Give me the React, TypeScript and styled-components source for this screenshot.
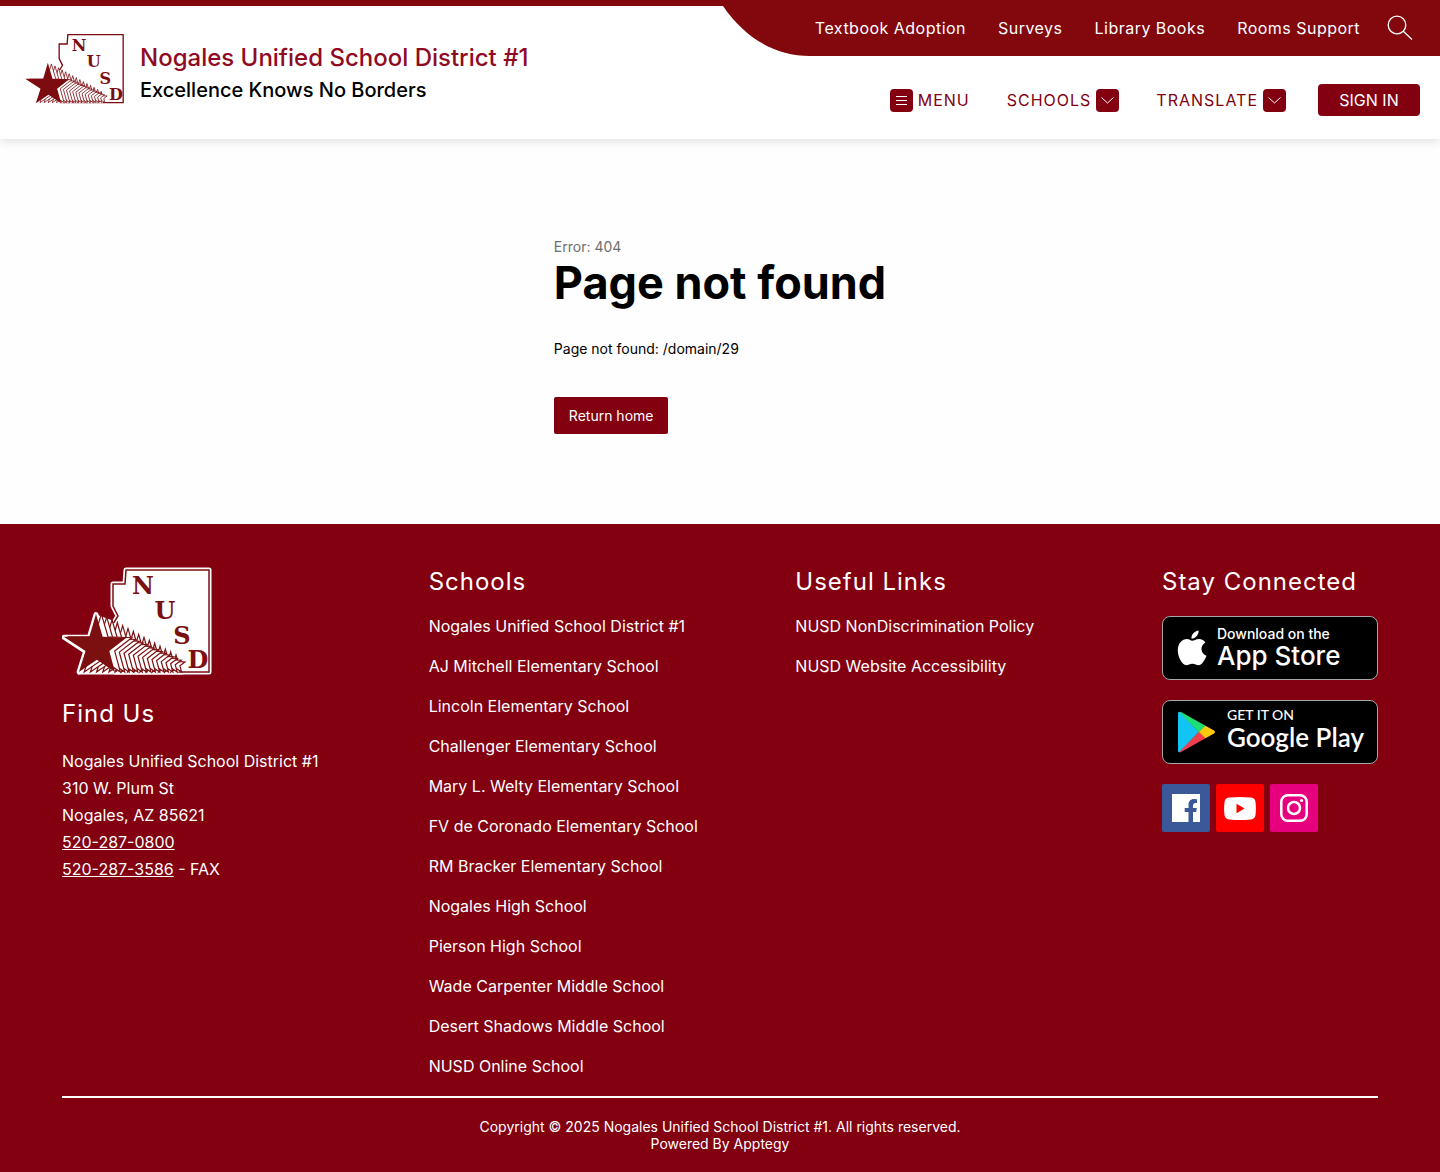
import React from "react";
import styled, { createGlobalStyle } from "styled-components";

const maroon = "#820010";
const banner = "#82080d";

const GlobalStyle = createGlobalStyle`
  *, *::before, *::after { box-sizing: border-box; }
  body {
    margin: 0;
    background: #fefefe;
    color: #000;
    font-family: Inter, "Liberation Sans", sans-serif;
    font-size: 16px;
  }
  h1, h2, p, ul { margin: 0; padding: 0; }
  ul { list-style: none; }
  a { color: inherit; text-decoration: none; }
  button { font: inherit; border: 0; cursor: pointer; }
  svg { display: block; flex: none; }
`;

/* ---------- district logo ---------- */

const starPoints = (scale: number, tipX: number, baseY: number) =>
  [
    [34, 45], [41, 69], [66, 70], [48, 84], [54, 106],
    [35, 93], [16, 106], [23, 84], [0, 69], [27, 69],
  ]
    .map(([x, y]) => `${tipX + (x - 34) * scale},${baseY + (y - 106) * scale}`)
    .join(" ");

const trail = Array.from({ length: 15 }, (_, i) => {
  const t = (15 - i) / 15;
  return { scale: 1 - t * 0.72, x: 34 + t * 80 };
});

const statePath = "M64 3 H147 V105 H104 L54 105 L48 68 L51 57 L56 49 L51 39 V17 H63 Z";

function Logo({ width, height, outlined }: { width: number; height: number; outlined?: boolean }) {
  const ink = outlined ? "#7c0f10" : "#7d0c10";
  return (
    <svg
      width={width}
      height={height}
      viewBox={outlined ? "0 0 150 108" : "0 2 148 105"}
      role="img"
      aria-label="NUSD logo"
    >
      {outlined && (
        <g fill="#fff" stroke="#fff" strokeWidth="5" strokeLinejoin="round">
          <path d={statePath} />
          <polygon points={starPoints(0.94, 34, 105)} />
          <path d="M34 50 L56 58 L120 92 V105 H18 L30 92 Z" />
        </g>
      )}
      <path d={statePath} fill="#fff" stroke={ink} strokeWidth={outlined ? 1.5 : 2} />
      <path d="M40 56 L52 56 L122 91 L116 106 H40 Z" fill="#fff" />
      {trail.map((s) => (
        <polygon key={s.x} points={starPoints(s.scale, s.x, 105)} fill="#fff" stroke={ink} strokeWidth="1.2" />
      ))}
      <polygon points={starPoints(outlined ? 0.95 : 1, 34, outlined ? 105 : 106)} fill={ink} />
      <g fill={ink} fontFamily='"DejaVu Serif", serif' fontWeight="700" fontSize="24" textAnchor="middle">
        <text x="81" y="27">N</text>
        <text x="103" y="52">U</text>
        <text x="120" y="77">S</text>
        <text x="136" y="101">D</text>
      </g>
    </svg>
  );
}

/* ---------- header ---------- */

const Header = styled.header`
  display: flex;
  justify-content: space-between;
  border-top: 6px solid ${banner};
  background: #fff;
  box-shadow: 0 2px 10px rgba(0, 0, 0, 0.13);
`;

const Brand = styled.a`
  display: flex;
  align-items: center;
  gap: 16px;
  padding: 0 0 7px 25px;
`;

const BrandText = styled.span`
  display: flex;
  flex-direction: column;
  gap: 1px;
  padding-top: 7px;
`;

const District = styled.span`
  color: #8f0a22;
  font-size: 24px;
  font-weight: 500;
  line-height: 34px;
`;

const Motto = styled.span`
  font-size: 20px;
  font-weight: 500;
  line-height: 28px;
`;

const HeaderSide = styled.div`
  display: flex;
  flex-direction: column;
  align-items: flex-end;
`;

const TopBar = styled.div`
  display: flex;
  height: 50px;
`;

const TopNav = styled.nav`
  display: flex;
  align-items: center;
  gap: 32px;
  padding: 0 27px 6px 0;
  background: ${banner};
  color: #fff;
  letter-spacing: 0.03em;
`;

const SearchButton = styled.button`
  padding: 0;
  margin-left: -5px;
  background: none;
  color: #fff;
`;

const MainNav = styled.nav`
  display: flex;
  align-items: center;
  padding: 28px 20px 23px 0;
  gap: 37px;
`;

const NavButton = styled.button`
  display: flex;
  align-items: center;
  gap: 5px;
  padding: 0;
  background: none;
  color: ${maroon};
  letter-spacing: 1px;
`;

const IconTile = styled.span`
  display: grid;
  place-items: center;
  width: 23px;
  height: 23px;
  border-radius: 4px;
  background: ${maroon};
  color: #fff;
`;

const SignIn = styled.button`
  width: 102px;
  height: 32px;
  margin-left: -5px;
  border-radius: 4px;
  background: ${maroon};
  color: #fff;
`;

const Chevron = () => (
  <IconTile>
    <svg width="13" height="7" viewBox="0 0 13 7" fill="none" stroke="currentColor">
      <path d="M0.5 0.5 L6.5 6 L12.5 0.5" />
    </svg>
  </IconTile>
);

/* ---------- error message ---------- */

const Main = styled.main`
  display: flex;
  justify-content: center;
  padding: 98px 20px 90px;
`;

const ErrorCode = styled.p`
  color: #6f6f6f;
  font-size: 14px;
  line-height: 20px;
`;

const ErrorTitle = styled.h1`
  font-size: 45px;
  font-weight: 700;
  line-height: 52px;
`;

const ErrorDetail = styled.p`
  margin: 30px 0 38px;
  font-size: 14px;
  line-height: 20px;
`;

const HomeLink = styled.a`
  display: inline-block;
  padding: 0 15px;
  border-radius: 2px;
  background: ${maroon};
  color: #fff;
  font-size: 14px;
  line-height: 37px;
`;

/* ---------- footer ---------- */

const Footer = styled.footer`
  padding: 43px 62px 20px;
  background: ${maroon};
  color: #fff;
`;

const Columns = styled.div`
  display: grid;
  grid-template-columns: repeat(3, 1fr) 216px;
  padding-bottom: 20px;
  border-bottom: 2px solid #fff;
`;

const ColumnTitle = styled.h2<{ $spaced?: boolean }>`
  margin-top: ${(p) => (p.$spaced ? "24px" : "0")};
  font-size: 24px;
  font-weight: 400;
  line-height: 30px;
  letter-spacing: 1px;
`;

const Address = styled.address`
  margin-top: 19px;
  font-style: normal;
  line-height: 27px;
  a { text-decoration: underline; }
`;

const LinkList = styled.ul`
  display: grid;
  gap: 20px;
  margin-top: 19px;
  line-height: 20px;
`;

const Connect = styled.div`
  display: grid;
  gap: 20px;
  margin-top: 19px;
`;

const Store = styled.a`
  display: flex;
  align-items: center;
  height: 64px;
  padding-left: 14px;
  gap: 10px;
  border: 1px solid #a6a6a6;
  border-radius: 8px;
  background: #000;
  white-space: nowrap;
`;

const StoreText = styled.span<{ $google?: boolean }>`
  display: flex;
  flex-direction: column;
  padding-bottom: ${(p) => (p.$google ? "6px" : "0")};
  font-family: ${(p) => (p.$google ? 'Lato, "Open Sans", sans-serif' : "inherit")};
  font-weight: ${(p) => (p.$google ? 600 : 500)};
`;

const StoreSmall = styled.span`
  font-size: 14px;
  font-weight: 500;
  line-height: 16px;
`;

const StoreName = styled.span`
  font-size: 26px;
  line-height: 28px;
`;

const Socials = styled.div`
  display: flex;
  gap: 6px;
`;

const Social = styled.a<{ $color: string }>`
  display: grid;
  place-items: center;
  width: 48px;
  height: 48px;
  border-radius: 2px;
  background: ${(p) => p.$color};
`;

const Legal = styled.div`
  padding-top: 20px;
  font-size: 14px;
  line-height: 17px;
  text-align: center;
`;

const topLinks = ["Textbook Adoption", "Surveys", "Library Books", "Rooms Support"];

const schools = [
  "Nogales Unified School District #1",
  "AJ Mitchell Elementary School",
  "Lincoln Elementary School",
  "Challenger Elementary School",
  "Mary L. Welty Elementary School",
  "FV de Coronado Elementary School",
  "RM Bracker Elementary School",
  "Nogales High School",
  "Pierson High School",
  "Wade Carpenter Middle School",
  "Desert Shadows Middle School",
  "NUSD Online School",
];

const usefulLinks = ["NUSD NonDiscrimination Policy", "NUSD Website Accessibility"];

const Links = ({ items }: { items: string[] }) => (
  <LinkList>
    {items.map((item) => (
      <li key={item}><a href="#">{item}</a></li>
    ))}
  </LinkList>
);

export default function App() {
  return (
    <>
      <GlobalStyle />
      <Header>
        <Brand href="#">
          <Logo width={99} height={70} />
          <BrandText>
            <District>Nogales Unified School District #1</District>
            <Motto>Excellence Knows No Borders</Motto>
          </BrandText>
        </Brand>
        <HeaderSide>
          <TopBar>
            <svg width="92" height="50" viewBox="0 0 92 50" fill={banner} aria-hidden="true">
              <path d="M0 0 C22 32 52 50 87 50 H92 V0 Z" />
            </svg>
            <TopNav aria-label="Quick links">
              {topLinks.map((link) => <a href="#" key={link}>{link}</a>)}
              <SearchButton aria-label="Search">
                <svg width="26" height="26" viewBox="0 0 26 26" fill="none" stroke="currentColor" strokeWidth="1.3">
                  <circle cx="10" cy="10" r="8.8" />
                  <path d="M16.3 16.3 L25 24.5" />
                </svg>
              </SearchButton>
            </TopNav>
          </TopBar>
          <MainNav aria-label="Main">
            <NavButton>
              <IconTile>
                <svg width="11" height="9" viewBox="0 0 11 9" stroke="currentColor">
                  <path d="M0 0.5 H11 M0 4.5 H11 M0 8.5 H11" />
                </svg>
              </IconTile>
              MENU
            </NavButton>
            <NavButton>SCHOOLS<Chevron /></NavButton>
            <NavButton>TRANSLATE<Chevron /></NavButton>
            <SignIn>SIGN IN</SignIn>
          </MainNav>
        </HeaderSide>
      </Header>

      <Main>
        <div>
          <ErrorCode>Error: 404</ErrorCode>
          <ErrorTitle>Page not found</ErrorTitle>
          <ErrorDetail>Page not found: /domain/29</ErrorDetail>
          <HomeLink href="#">Return home</HomeLink>
        </div>
      </Main>

      <Footer>
        <Columns>
          <div>
            <Logo width={150} height={108} outlined />
            <ColumnTitle $spaced>Find Us</ColumnTitle>
            <Address>
              Nogales Unified School District #1<br />
              310 W. Plum St<br />
              Nogales, AZ 85621<br />
              <a href="tel:520-287-0800">520-287-0800</a><br />
              <a href="tel:520-287-3586">520-287-3586</a> - FAX
            </Address>
          </div>
          <div>
            <ColumnTitle>Schools</ColumnTitle>
            <Links items={schools} />
          </div>
          <div>
            <ColumnTitle>Useful Links</ColumnTitle>
            <Links items={usefulLinks} />
          </div>
          <div>
            <ColumnTitle>Stay Connected</ColumnTitle>
            <Connect>
              <Store href="#">
                <svg width="30" height="36" viewBox="0 0 30 36" fill="#fff">
                  <path d="M21.6 0.5 C21.9 4.6 18.4 8.8 14.4 8.6 C14 4.7 17.6 0.9 21.6 0.5 Z" />
                  <path d="M15 10.8 C17 10.8 18.8 9 22.2 9 C24.6 9 27 10.3 28.4 12.4 C22.6 15.8 23.5 23.4 29.5 25.8 C28.2 29.5 25 35.2 21.6 35.2 C19.2 35.2 18.3 33.7 15.4 33.7 C12.5 33.7 11.5 35.2 9.2 35.2 C5.2 35.2 0.8 27.2 0.8 20.6 C0.8 13.2 5.4 9.1 9.8 9.1 C12.2 9.1 13.8 10.8 15 10.8 Z" />
                </svg>
                <StoreText>
                  <StoreSmall>Download on the</StoreSmall>
                  <StoreName>App Store</StoreName>
                </StoreText>
              </Store>
              <Store href="#">
                <svg width="40" height="42" viewBox="0 0 40 42">
                  <path d="M1 2 Q1 0.5 3 1 L22 21 L3 41 Q1 41.5 1 40 Z" fill="#12c4f4" />
                  <path d="M2 0.7 Q3 0.5 4.5 1.3 L29 15 L22 21.5 Z" fill="#1fdc74" />
                  <path d="M2 41.3 Q3 41.5 4.5 40.7 L29 27 L22 20.5 Z" fill="#ee3f4c" />
                  <path d="M28.5 14.7 L37 19.5 Q39 21 37 22.5 L28.5 27.3 L22 21 Z" fill="#fdc909" />
                </svg>
                <StoreText $google>
                  <StoreSmall>GET IT ON</StoreSmall>
                  <StoreName>Google Play</StoreName>
                </StoreText>
              </Store>
              <Socials>
                <Social href="#" $color="#3b5998" aria-label="Facebook">
                  <svg width="28" height="28" viewBox="0 0 28 28">
                    <path fill="#fff" d="M0 0 H28 V28 H21 V18 H24.2 L24.8 14 H21 V11.5 Q21 9 23.2 9 H25 V5.2 Q23.5 5 22 5 C18.5 5 16.5 7.2 16.5 10.8 V14 H12.7 V18 H16.5 V28 H0 Z" />
                  </svg>
                </Social>
                <Social href="#" $color="#ff0000" aria-label="YouTube">
                  <svg width="32" height="23" viewBox="0 0 32 23">
                    <path fill="#fff" d="M5 0.6 Q16 -0.5 27 0.6 Q31 1 31.5 5 Q32.3 11.5 31.5 18 Q31 22 27 22.4 Q16 23.5 5 22.4 Q1 22 0.5 18 Q-0.3 11.5 0.5 5 Q1 1 5 0.6 Z" />
                    <path fill="#f00" d="M12.5 6.8 L20.5 11.5 L12.5 16.2 Z" />
                  </svg>
                </Social>
                <Social href="#" $color="#e6007e" aria-label="Instagram">
                  <svg width="28" height="28" viewBox="0 0 28 28" fill="none" stroke="#fff" strokeWidth="2.5">
                    <rect x="1.3" y="1.3" width="25.4" height="25.4" rx="6.5" />
                    <circle cx="14" cy="14" r="6" />
                    <circle cx="21.5" cy="6.5" r="1.6" fill="#fff" stroke="none" />
                  </svg>
                </Social>
              </Socials>
            </Connect>
          </div>
        </Columns>
        <Legal>
          <p>Copyright © 2025 Nogales Unified School District #1. All rights reserved.</p>
          <p>Powered By <a href="#">Apptegy</a></p>
        </Legal>
      </Footer>
    </>
  );
}
